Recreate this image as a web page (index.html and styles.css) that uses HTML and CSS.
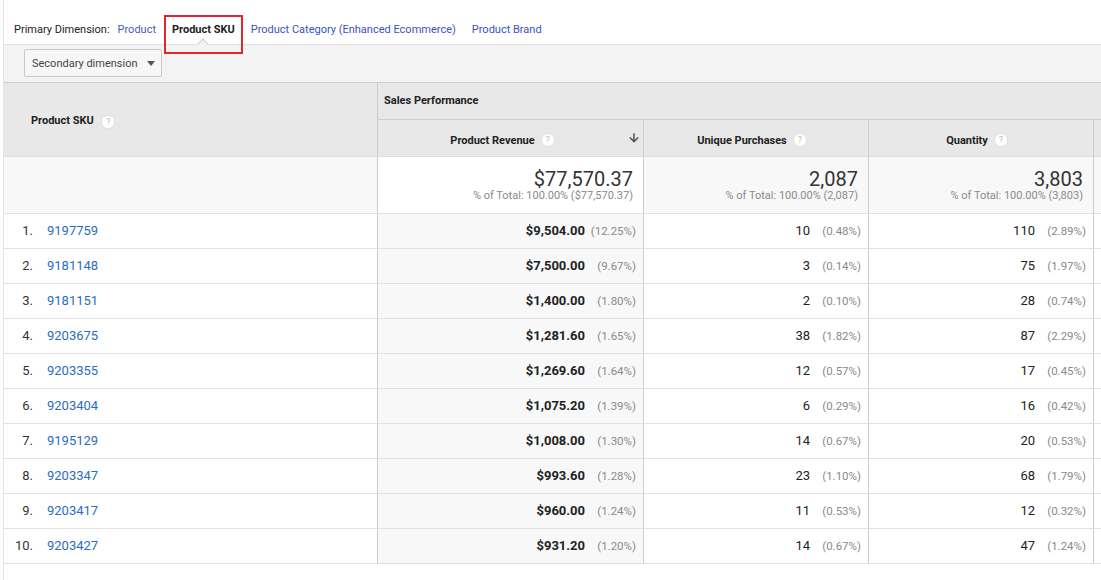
FILE: index.html
```html
<!DOCTYPE html>
<html lang="en">
<head>
<meta charset="utf-8">
<title>Product SKU report</title>
<link rel="stylesheet" href="styles.css">
</head>
<body>
<div class="page">
  <div class="tabs">
    <span class="tabs-label">Primary Dimension:</span>
    <a class="tab tab-visited" href="#">Product</a>
    <span class="tab active">Product SKU</span>
    <a class="tab" href="#">Product Category (Enhanced Ecommerce)</a>
    <a class="tab" href="#">Product Brand</a>
  </div>
  <div class="toolbar">
    <button class="sec-btn" type="button">Secondary dimension <span class="dd-caret"></span></button>
  </div>
  <table class="report">
    <colgroup>
      <col class="c-sku"><col class="c-m"><col class="c-m"><col class="c-m"><col class="c-m">
    </colgroup>
    <thead>
      <tr>
        <th rowspan="2" class="h-dim">Product SKU <span class="help">?</span></th>
        <th colspan="4" class="h-group">Sales Performance</th>
      </tr>
      <tr>
        <th class="h-metric sorted"><div class="h-in"><span class="h-lbl">Product Revenue <span class="help">?</span></span><svg class="sort" viewBox="0 0 24 24" width="14" height="14"><path d="M20 12l-1.8-1.8L13.3 15.1V4h-2.6v11.1L5.8 10.2 4 12l8 8 8-8z" fill="#555"/></svg></div></th>
        <th class="h-metric"><div class="h-in"><span class="h-lbl">Unique Purchases <span class="help">?</span></span></div></th>
        <th class="h-metric"><div class="h-in"><span class="h-lbl">Quantity <span class="help">?</span></span></div></th>
        <th class="h-metric"></th>
      </tr>
    </thead>
    <tbody>
      <tr class="totals">
        <td class="dim"></td>
        <td class="m sorted"><div class="tot">$77,570.37</div><div class="tot-sub">% of Total: 100.00% ($77,570.37)</div></td>
        <td class="m"><div class="tot">2,087</div><div class="tot-sub">% of Total: 100.00% (2,087)</div></td>
        <td class="m"><div class="tot">3,803</div><div class="tot-sub">% of Total: 100.00% (3,803)</div></td>
        <td class="m"></td>
      </tr>
      <tr><td class="dim"><span class="rank">1.</span><a class="sku" href="#">9197759</a></td><td class="m sorted"><b class="v">$9,504.00</b><span class="p">(12.25%)</span></td><td class="m"><span class="v">10</span><span class="p">(0.48%)</span></td><td class="m"><span class="v">110</span><span class="p">(2.89%)</span></td><td class="m"></td></tr>
      <tr><td class="dim"><span class="rank">2.</span><a class="sku" href="#">9181148</a></td><td class="m sorted"><b class="v">$7,500.00</b><span class="p">(9.67%)</span></td><td class="m"><span class="v">3</span><span class="p">(0.14%)</span></td><td class="m"><span class="v">75</span><span class="p">(1.97%)</span></td><td class="m"></td></tr>
      <tr><td class="dim"><span class="rank">3.</span><a class="sku" href="#">9181151</a></td><td class="m sorted"><b class="v">$1,400.00</b><span class="p">(1.80%)</span></td><td class="m"><span class="v">2</span><span class="p">(0.10%)</span></td><td class="m"><span class="v">28</span><span class="p">(0.74%)</span></td><td class="m"></td></tr>
      <tr><td class="dim"><span class="rank">4.</span><a class="sku" href="#">9203675</a></td><td class="m sorted"><b class="v">$1,281.60</b><span class="p">(1.65%)</span></td><td class="m"><span class="v">38</span><span class="p">(1.82%)</span></td><td class="m"><span class="v">87</span><span class="p">(2.29%)</span></td><td class="m"></td></tr>
      <tr><td class="dim"><span class="rank">5.</span><a class="sku" href="#">9203355</a></td><td class="m sorted"><b class="v">$1,269.60</b><span class="p">(1.64%)</span></td><td class="m"><span class="v">12</span><span class="p">(0.57%)</span></td><td class="m"><span class="v">17</span><span class="p">(0.45%)</span></td><td class="m"></td></tr>
      <tr><td class="dim"><span class="rank">6.</span><a class="sku" href="#">9203404</a></td><td class="m sorted"><b class="v">$1,075.20</b><span class="p">(1.39%)</span></td><td class="m"><span class="v">6</span><span class="p">(0.29%)</span></td><td class="m"><span class="v">16</span><span class="p">(0.42%)</span></td><td class="m"></td></tr>
      <tr><td class="dim"><span class="rank">7.</span><a class="sku" href="#">9195129</a></td><td class="m sorted"><b class="v">$1,008.00</b><span class="p">(1.30%)</span></td><td class="m"><span class="v">14</span><span class="p">(0.67%)</span></td><td class="m"><span class="v">20</span><span class="p">(0.53%)</span></td><td class="m"></td></tr>
      <tr><td class="dim"><span class="rank">8.</span><a class="sku" href="#">9203347</a></td><td class="m sorted"><b class="v">$993.60</b><span class="p">(1.28%)</span></td><td class="m"><span class="v">23</span><span class="p">(1.10%)</span></td><td class="m"><span class="v">68</span><span class="p">(1.79%)</span></td><td class="m"></td></tr>
      <tr><td class="dim"><span class="rank">9.</span><a class="sku" href="#">9203417</a></td><td class="m sorted"><b class="v">$960.00</b><span class="p">(1.24%)</span></td><td class="m"><span class="v">11</span><span class="p">(0.53%)</span></td><td class="m"><span class="v">12</span><span class="p">(0.32%)</span></td><td class="m"></td></tr>
      <tr><td class="dim"><span class="rank">10.</span><a class="sku" href="#">9203427</a></td><td class="m sorted"><b class="v">$931.20</b><span class="p">(1.20%)</span></td><td class="m"><span class="v">14</span><span class="p">(0.67%)</span></td><td class="m"><span class="v">47</span><span class="p">(1.24%)</span></td><td class="m"></td></tr>
    </tbody>
  </table>
</div>
</body>
</html>
```
FILE: styles.css
```css
html, body {
  margin: 0;
  padding: 0;
  background: #fff;
  overflow: hidden;
}
body {
  font-family: Roboto, "Liberation Sans", Arial, sans-serif;
  color: #333;
  padding-left: 3px;
}
.page {
  border-left: 1px solid #e4e4e4;
  min-height: 580px;
  overflow: hidden;
}

/* ---- primary dimension tabs ---- */
.tabs {
  display: flex;
  align-items: center;
  box-sizing: border-box;
  height: 44px;
  padding: 16px 0 0 10px;
  font-size: 11px;
  line-height: 14px;
}
.tabs-label {
  color: #222;
}
.tab {
  padding: 0 8px;
  color: #3a52c6;
  text-decoration: none;
}
.tab-visited {
  color: #4f56c2;
}
.tab.active {
  position: relative;
  color: #222;
  font-weight: 700;
}
.tab.active::after {
  content: "";
  position: absolute;
  left: 0;
  right: 0;
  top: -8px;
  bottom: -17px;
  border: 2px solid #e3252b;
  z-index: 2;
}
.tab.active::before {
  content: "";
  position: absolute;
  left: calc(50% - 4px);
  top: 17px;
  width: 7px;
  height: 7px;
  background: #f3f3f3;
  border-left: 1px solid #d2d2d2;
  border-top: 1px solid #d2d2d2;
  transform: rotate(45deg);
  z-index: 1;
}

/* ---- toolbar ---- */
.toolbar {
  background: #f3f3f3;
  border-top: 1px solid #e2e2e2;
  padding: 4px 0 5px 20px;
  height: 28px;
}
.sec-btn {
  display: flex;
  align-items: center;
  box-sizing: border-box;
  height: 28px;
  width: 138px;
  padding: 0 0 0 7px;
  border: 1px solid #c9c9c9;
  border-radius: 2px;
  background: #f7f7f7;
  font-family: Roboto, "Liberation Sans", Arial, sans-serif;
  font-size: 11px;
  color: #444;
}
.dd-caret {
  margin-left: 9px;
  width: 0;
  height: 0;
  border-left: 4.5px solid transparent;
  border-right: 4.5px solid transparent;
  border-top: 5px solid #555;
}

/* ---- table ---- */
.report {
  table-layout: fixed;
  border-collapse: separate;
  border-spacing: 0;
  width: 1315px;
}
.c-sku { width: 374px; }
.c-m { width: 266px; }
.report col:nth-child(3),
.report col:nth-child(4),
.report col:nth-child(5) { width: 225px; }

.report th,
.report td {
  box-sizing: border-box;
  padding: 0;
  vertical-align: middle;
}
.report th {
  background: #e8e8e8;
  color: #222;
  font-size: 11px;
  font-weight: 700;
  text-align: left;
}
.h-dim {
  border-top: 1px solid #cdcdcd;
  border-right: 1px solid #cdcdcd;
  border-bottom: 1px solid #dedede;
  padding: 4px 0 0 27px !important;
  height: 75px;
}
.h-group {
  border-top: 1px solid #cdcdcd;
  border-bottom: 1px solid #cdcdcd;
  height: 38px;
  padding: 0 0 2px 6px !important;
}
.h-metric {
  height: 37px;
  padding-top: 4px !important;
  border-right: 1px solid #cdcdcd;
  border-bottom: 1px solid #dedede;
}
.h-in {
  display: flex;
  align-items: center;
  padding-right: 8px;
}
.sorted .h-in {
  padding-right: 2px;
}
.h-lbl {
  flex: 1;
  display: flex;
  align-items: center;
  justify-content: center;
}
.sort {
  display: block;
  flex: none;
  margin-top: -4px;
}
.help {
  display: inline-flex;
  align-items: center;
  justify-content: center;
  box-sizing: border-box;
  width: 14px;
  height: 14px;
  margin-left: 6px;
  border-radius: 50%;
  background: #fff;
  border: 1px solid #e0e0e0;
  color: #bdbdbd;
  font-size: 9px;
  font-weight: 400;
  vertical-align: middle;
}
.h-dim .help {
  margin-left: 5px;
}

.report td {
  height: 35px;
  border-bottom: 1px solid #e2e2e2;
  font-size: 13px;
  background: #fff;
  padding-bottom: 2px;
}
.report td.dim {
  border-right: 1px solid #cdcdcd;
}
.report td.m {
  border-right: 1px solid #cdcdcd;
  text-align: right;
  padding-right: 7px;
  white-space: nowrap;
}
.report td.m.sorted {
  background: #f8f8f8;
}
.rank {
  display: inline-block;
  width: 29px;
  text-align: right;
  margin-right: 14px;
  color: #333;
}
.sku {
  color: #2a6cc2;
  text-decoration: none;
}
.v {
  color: #222;
}
b.v {
  font-weight: 700;
}
.p {
  display: inline-block;
  width: 51px;
  text-align: right;
  font-size: 11.5px;
  color: #8a8a8a;
}

/* totals row */
.report tr.totals td {
  height: 57px;
  background: #f8f8f8;
  padding-bottom: 0;
}
.report tr.totals td.m {
  padding-right: 10px;
}
.report tr.totals td.m.sorted {
  background: #fff;
}
.tot {
  font-size: 20px;
  line-height: 22px;
  color: #333;
}
.tot-sub {
  font-size: 11px;
  line-height: 12px;
  color: #8a8a8a;
}
```
